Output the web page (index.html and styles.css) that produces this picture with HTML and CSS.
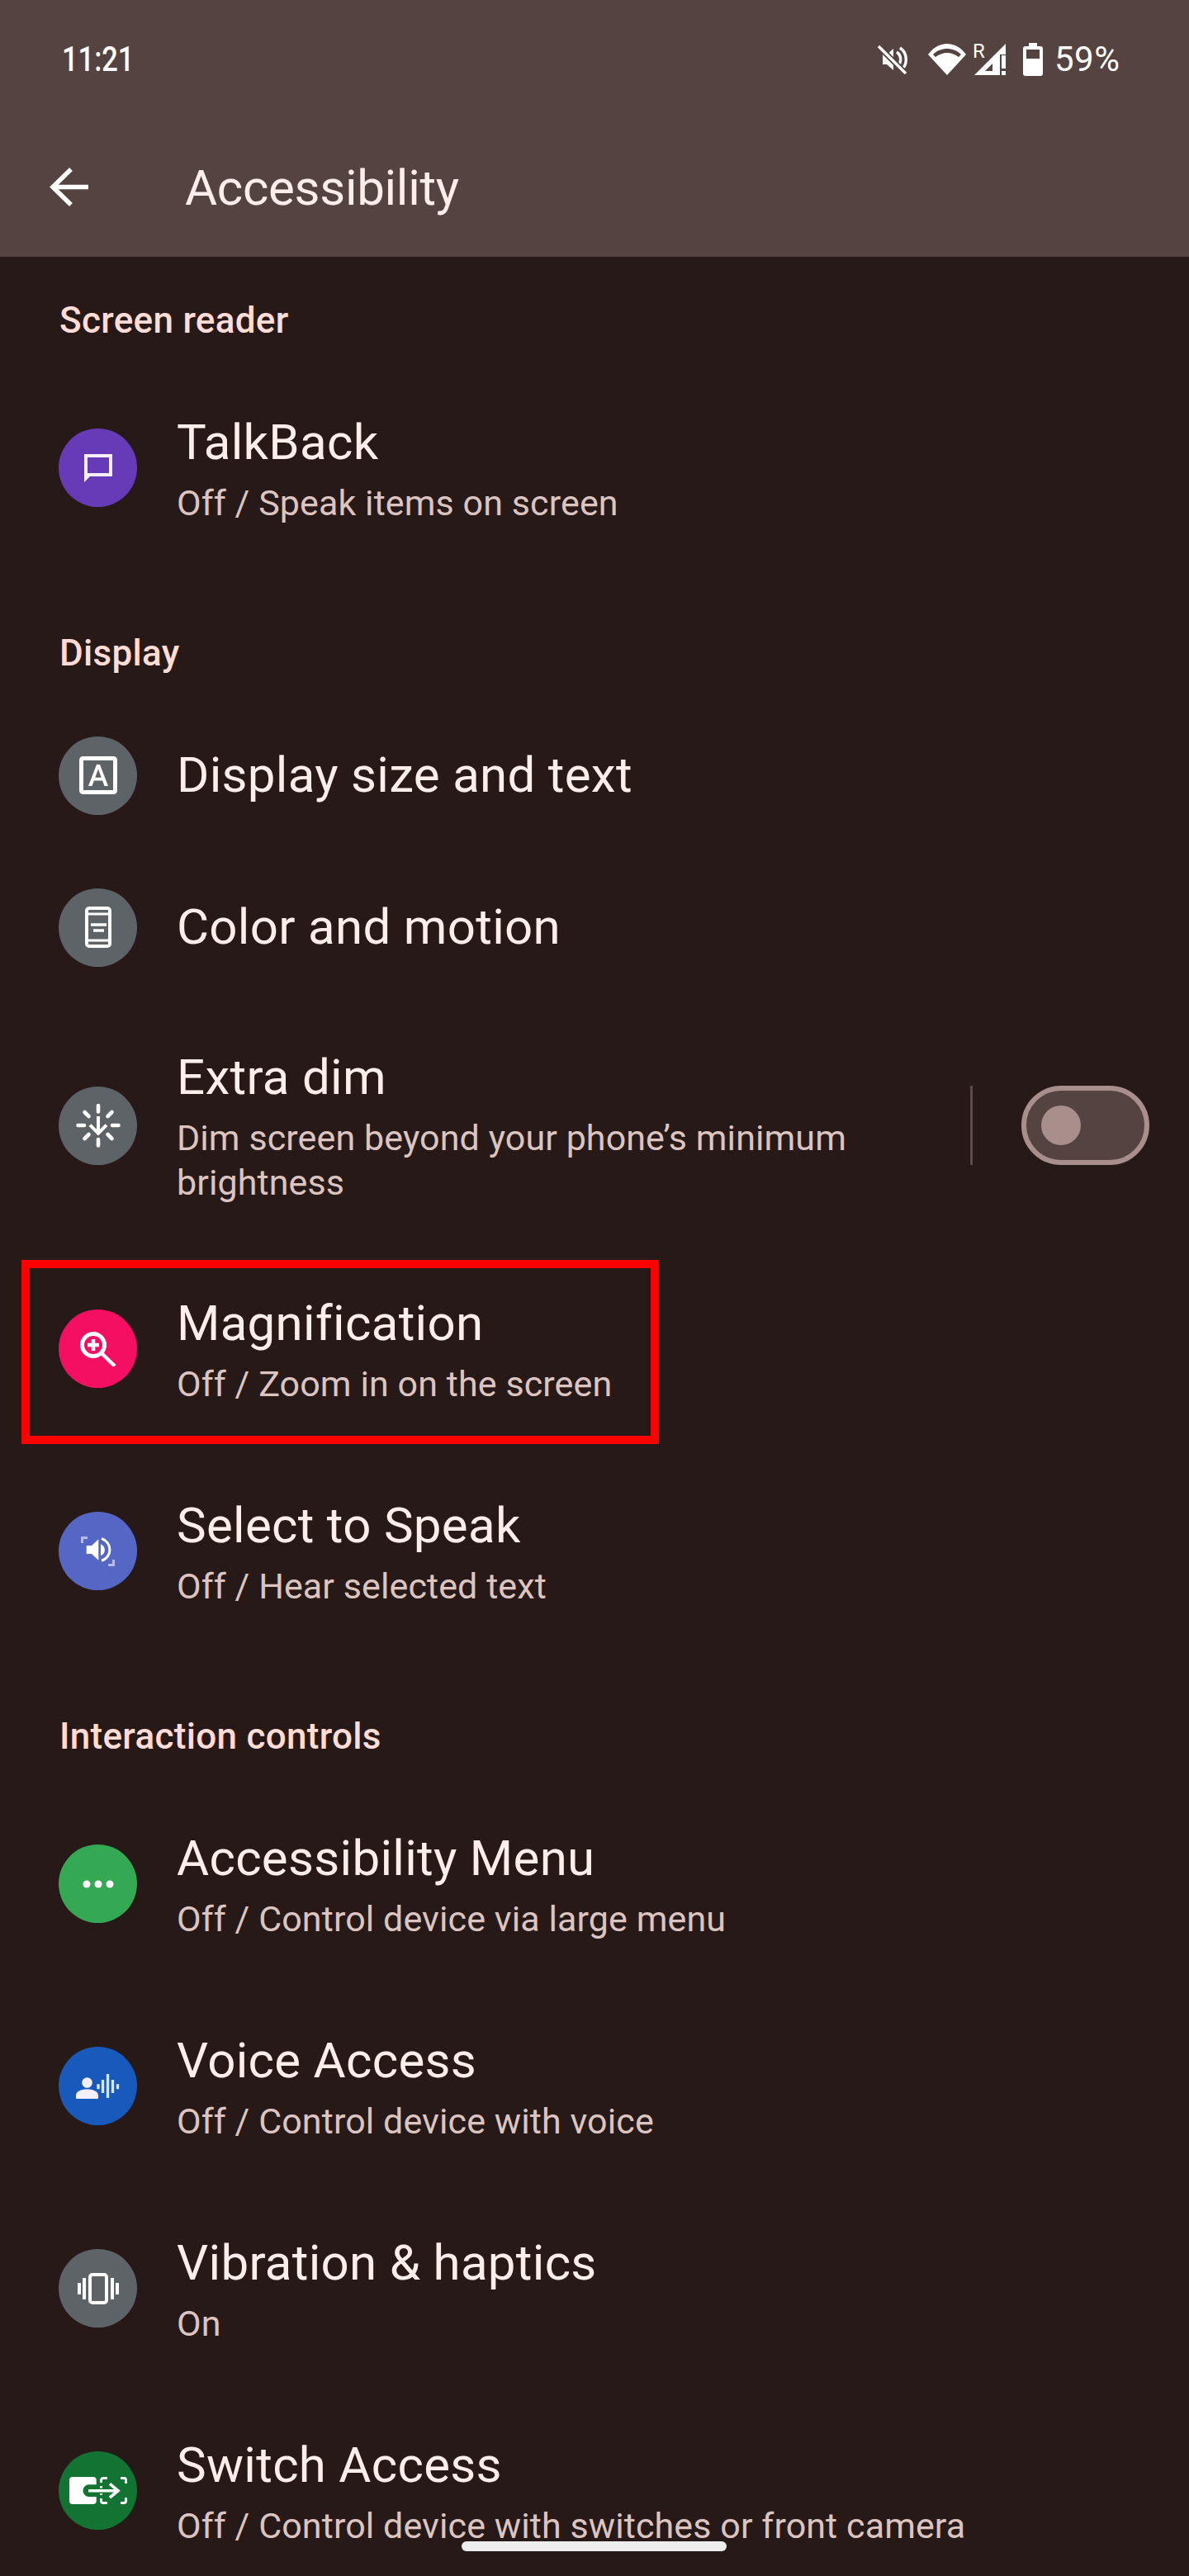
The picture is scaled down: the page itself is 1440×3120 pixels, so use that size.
FILE: index.html
```html
<!DOCTYPE html>
<html lang="en">

<head>
    <meta charset="UTF-8">
    <meta name="viewport" content="width=device-width, initial-scale=1.0">
    <title>Accessibility</title>
    <link rel="stylesheet" href="styles.css">
</head>

<body>
    <div class="phone">
        <header class="top">
            <div class="status">
                <span class="time">11:21</span>
                <div class="status-icons">
                    <svg class="ic-mute" width="38" height="36" viewBox="0 0 38 36">
                        <path d="M7 12h5l8-7v26l-8-7H7z" fill="#fff"/>
                        <path d="M24 9a11 11 0 0 1 0 18M28 4a17 17 0 0 1 0 28" fill="none" stroke="#fff" stroke-width="3.4"/>
                        <path d="M2 2l33 33" stroke="#544341" stroke-width="7"/>
                        <path d="M2 2l33 33" stroke="#fff" stroke-width="3.4"/>
                    </svg>
                    <svg class="ic-wifi" width="46" height="38" viewBox="0 0 46 38">
                        <path d="M23 38L0 13C6 5 14 0 23 0s17 5 23 13z" fill="#fff"/>
                        <path d="M6 13C11 8 17 6 23 6s12 2 17 7l-3 3C33 13 28 11 23 11s-10 2-14 5z" fill="#544341"/>
                    </svg>
                    <div class="signal">
                        <span class="roam">R</span>
                        <svg width="40" height="38" viewBox="0 0 40 38">
                            <path d="M0 38L38 0v13h-7v25z" fill="#fff"/>
                            <path d="M22 24v9h-9z" fill="#544341"/>
                            <path d="M33 14h5v16h-5zM33 33h5v5h-5z" fill="#fff"/>
                        </svg>
                    </div>
                    <svg class="ic-batt" width="24" height="40" viewBox="0 0 24 40">
                        <path d="M7 0h10v4h4a3 3 0 0 1 3 3v30a3 3 0 0 1-3 3H3a3 3 0 0 1-3-3V7a3 3 0 0 1 3-3h4z" fill="#fff"/>
                        <path d="M4 8h16v11H4z" fill="#544341"/>
                    </svg>
                    <span class="batt-text">59%</span>
                </div>
            </div>
            <div class="appbar">
                <svg class="back" width="48" height="48" viewBox="0 0 48 48">
                    <path d="M47 23.500H5M26 2L4 23.500 26 45" fill="none" stroke="#fff" stroke-width="5.500"/>
                </svg>
                <h1>Accessibility</h1>
            </div>
        </header>

        <main>
            <h2 class="label first">Screen reader</h2>
            <div class="row">
                <div class="circle purple">
                    <svg width="34" height="34" viewBox="0 0 34 34">
                        <path d="M0 0h34v27H7l-7 7zM4 4v19h26V4z" fill="#f6eefc" fill-rule="evenodd"/>
                    </svg>
                </div>
                <div class="text">
                    <div class="title">TalkBack</div>
                    <div class="sub">Off / Speak items on screen</div>
                </div>
            </div>

            <h2 class="label">Display</h2>
            <div class="row single">
                <div class="circle gray">
                    <svg width="46" height="46" viewBox="0 0 46 46">
                        <rect x="2.500" y="2.500" width="41" height="41" rx="2" fill="none" stroke="#fff" stroke-width="5"/>
                        <path d="M11 36L21 10h4l10 26h-4.500l-2.400-6.500H17.900L15.500 36zM19.300 25.800h7.400L23 15.500z" fill="#fff"/>
                    </svg>
                </div>
                <div class="text">
                    <div class="title">Display size and text</div>
                </div>
            </div>
            <div class="row single">
                <div class="circle gray">
                    <svg width="32" height="50" viewBox="0 0 32 50">
                        <rect x="2" y="2" width="28" height="46" rx="3" fill="none" stroke="#fff" stroke-width="4"/>
                        <path d="M2 9h28M2 41h28" stroke="#fff" stroke-width="3"/>
                        <path d="M7 22h19M10 29h13" stroke="#fff" stroke-width="3.500"/>
                    </svg>
                </div>
                <div class="text">
                    <div class="title">Color and motion</div>
                </div>
            </div>
            <div class="row dim">
                <div class="circle gray">
                    <svg width="54" height="54" viewBox="0 0 54 54">
                        <path d="M27 3v7.500M27 44v7.500M2.500 27H10M44 27h7.500M10.500 11l5 5M38.500 38l5 5M43.500 11l-5 5M15.500 38l-5 5" fill="none" stroke="#fff" stroke-width="4.600" stroke-linecap="round"/>
                        <path d="M27 16v20M17 26.700l10 10 10-10" fill="none" stroke="#fff" stroke-width="4"/>
                    </svg>
                </div>
                <div class="text wide">
                    <div class="title">Extra dim</div>
                    <div class="sub">Dim screen beyond your phone’s minimum brightness</div>
                </div>
                <div class="divider"></div>
                <div class="toggle"><span class="knob"></span></div>
            </div>
            <div class="row">
                <div class="circle pink">
                    <svg width="44" height="42" viewBox="0 0 44 42">
                        <circle cx="16" cy="16" r="13.500" fill="none" stroke="#fff" stroke-width="5"/>
                        <path d="M26 26l16 15.500" stroke="#fff" stroke-width="4.500"/>
                        <path d="M9 16h14M16 9v14" stroke="#fff" stroke-width="4.500"/>
                    </svg>
                </div>
                <div class="text">
                    <div class="title">Magnification</div>
                    <div class="sub">Off / Zoom in on the screen</div>
                </div>
                <div class="red-box"></div>
            </div>
            <div class="row">
                <div class="circle indigo">
                    <svg width="41" height="36" viewBox="0 0 41 36">
                        <path d="M1.500 8V1.500H8M39.500 28v6.500H33" fill="none" stroke="#b4bdea" stroke-width="3"/>
                        <path d="M6.700 11H13l8.300-7.700v25.400L13 21H6.700z" fill="#fff"/>
                        <path d="M24 9.300a7.500 7.500 0 0 1 0 14z" fill="#fff"/>
                        <path d="M25 2.500a14 14 0 0 1 0 26.800" fill="none" stroke="#fff" stroke-width="3"/>
                    </svg>
                </div>
                <div class="text">
                    <div class="title">Select to Speak</div>
                    <div class="sub">Off / Hear selected text</div>
                </div>
            </div>

            <h2 class="label">Interaction controls</h2>
            <div class="row">
                <div class="circle green">
                    <svg width="38" height="10" viewBox="0 0 38 10">
                        <circle cx="5" cy="5" r="4.500" fill="#fff"/>
                        <circle cx="19" cy="5" r="4.500" fill="#fff"/>
                        <circle cx="33" cy="5" r="4.500" fill="#fff"/>
                    </svg>
                </div>
                <div class="text">
                    <div class="title">Accessibility Menu</div>
                    <div class="sub">Off / Control device via large menu</div>
                </div>
            </div>
            <div class="row">
                <div class="circle blue">
                    <svg width="54" height="30" viewBox="0 0 54 30">
                        <circle cx="13.500" cy="10.500" r="6.300" fill="#f3f0fb"/>
                        <path d="M0 29v-3c0-5 6-7.500 13.500-7.500S27 21 27 26v3a1 1 0 0 1-1 1H1a1 1 0 0 1-1-1z" fill="#f3f0fb"/>
                        <path d="M27 12.300v6M32.500 7v16M38.500 0v29M44.500 7v16M50.500 12.300v6" stroke="#dfe6fb" stroke-width="3.300"/>
                    </svg>
                </div>
                <div class="text">
                    <div class="title">Voice Access</div>
                    <div class="sub">Off / Control device with voice</div>
                </div>
            </div>
            <div class="row">
                <div class="circle gray">
                    <svg width="50" height="38" viewBox="0 0 50 38">
                        <rect x="15" y="2" width="20" height="34" rx="3" fill="none" stroke="#fff" stroke-width="4"/>
                        <path d="M2 12v14M8 6v26M42 6v26M48 12v14" stroke="#fff" stroke-width="4"/>
                    </svg>
                </div>
                <div class="text">
                    <div class="title">Vibration &amp; haptics</div>
                    <div class="sub">On</div>
                </div>
            </div>
            <div class="row">
                <div class="circle dark-green">
                    <svg width="70" height="33" viewBox="0 0 70 33">
                        <path d="M4 0h25a4 4 0 0 1 3.700 3v6.300H23a7.400 7.400 0 0 0 0 14.700h9.700V30a4 4 0 0 1-3.700 3H4a4 4 0 0 1-4-4V4a4 4 0 0 1 4-4z" fill="#fff"/>
                        <path d="M23 16.700h36M49 8.300l10 8.400-10 8.300" fill="none" stroke="#fff" stroke-width="3.600"/>
                        <path d="M46 1.500h-5a2.500 2.500 0 0 0-2.500 2.500v3M38.500 11v2.500M38.500 20v2M38.500 26v3a2.500 2.500 0 0 0 2.500 2.500h5M62 1.500h5A2.500 2.500 0 0 1 68.500 4v4M68.500 25v4a2.500 2.500 0 0 1-2.500 2.500h-4" fill="none" stroke="#fff" stroke-width="3"/>
                    </svg>
                </div>
                <div class="text">
                    <div class="title">Switch Access</div>
                    <div class="sub">Off / Control device with switches or front camera</div>
                </div>
            </div>
        </main>

        <div class="home-bar"></div>
    </div>
</body>

</html>
```

FILE: styles.css
```css
body {
    margin: 0;
    background-color: #271917;
    font-family: Roboto, "Noto Sans", sans-serif;
}

.phone {
    position: relative;
    width: 1440px;
    height: 3120px;
    overflow: hidden;
    background-color: #271917;
}

.top {
    height: 311px;
    background-color: #544341;
    color: #fff;
}

.status {
    height: 144px;
    display: flex;
    justify-content: space-between;
    align-items: flex-start;
    padding: 48px 86px 0 75px;
    box-sizing: border-box;
}

.time {
    font-size: 42px;
    line-height: 48px;
    font-weight: 500;
    transform: scaleX(0.82);
    transform-origin: left center;
}

.status-icons {
    display: flex;
    align-items: center;
    height: 48px;
}

.ic-mute {
    margin-right: 24px;
}

.signal {
    position: relative;
    margin-left: 10px;
    width: 40px;
    height: 38px;
}

.roam {
    position: absolute;
    left: -2px;
    top: -3px;
    font-size: 24px;
    line-height: 24px;
}

.ic-batt {
    margin-left: 19px;
}

.batt-text {
    width: 77px;
    margin-left: 14px;
    font-size: 42px;
    line-height: 48px;
    letter-spacing: 0.5px;
}

.appbar {
    display: flex;
    align-items: center;
    height: 166px;
    padding-left: 60px;
}

.appbar h1 {
    margin: 0 0 0 116px;
    font-size: 60px;
    font-weight: 400;
    letter-spacing: -0.3px;
    color: #fdeeeb;
}

.label {
    margin: 0;
    height: 60px;
    padding: 72px 72px 26px;
    font-size: 44px;
    line-height: 60px;
    font-weight: 500;
    letter-spacing: 0.3px;
    color: #ffdcd6;
}

.label.first {
    padding-top: 47px;
}

.row {
    position: relative;
    display: flex;
    align-items: center;
    height: 245px;
    padding-left: 71px;
}

.row.single {
    height: 184px;
}

.row.dim {
    height: 296px;
}

.circle {
    flex: none;
    width: 95px;
    height: 95px;
    border-radius: 50%;
    display: flex;
    align-items: center;
    justify-content: center;
}

.purple { background-color: #673ab7; }
.gray { background-color: #5e6367; }
.pink { background-color: #f50f63; }
.indigo { background-color: #5566c4; }
.green { background-color: #34a853; }
.blue { background-color: #185abc; }
.dark-green { background-color: #137333; }

.text {
    margin-left: 48px;
    width: 1000px;
}

.text.wide {
    width: 850px;
}

.title {
    font-size: 60px;
    line-height: 76px;
    letter-spacing: 0.3px;
    color: #fdeeeb;
}

.sub {
    margin-top: 8px;
    font-size: 43px;
    line-height: 54px;
    letter-spacing: 0.1px;
    color: #dcc5c1;
}

.divider {
    width: 3px;
    height: 96px;
    margin-left: 111px;
    background-color: #5c4a48;
}

.toggle {
    position: relative;
    box-sizing: border-box;
    width: 155px;
    height: 96px;
    margin-left: 59px;
    border: 6px solid #a98f8c;
    border-radius: 48px;
    background-color: #544341;
}

.knob {
    position: absolute;
    left: 18px;
    top: 18px;
    width: 48px;
    height: 48px;
    border-radius: 50%;
    background-color: #a98f8c;
}

.red-box {
    position: absolute;
    left: 26px;
    top: 15px;
    width: 772px;
    height: 223px;
    box-sizing: border-box;
    border: 10px solid #ff0000;
}

.home-bar {
    position: absolute;
    left: 559px;
    top: 3078px;
    width: 321px;
    height: 12px;
    border-radius: 6px;
    background-color: #ededed;
}
```
